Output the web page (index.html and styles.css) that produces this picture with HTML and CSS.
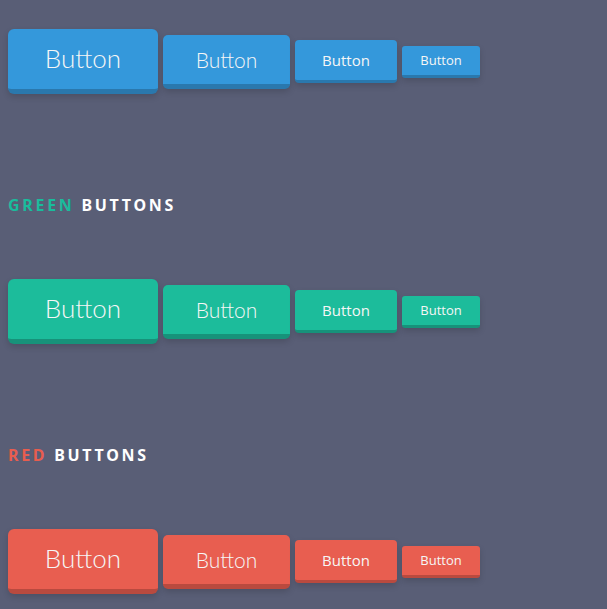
FILE: index.html
```html
<!DOCTYPE html>
<html>
<head>
<meta charset="utf-8">
<link rel="stylesheet" href="styles.css">
</head>
<body>
<div class="page">
  <section class="group">
    <div class="row">
      <button class="btn blue xl">Button</button>
      <button class="btn blue lg">Button</button>
      <button class="btn blue md">Button</button>
      <button class="btn blue sm">Button</button>
    </div>
  </section>
  <section class="group">
    <h2 class="title"><span class="accent-green">GREEN</span> BUTTONS</h2>
    <div class="row">
      <button class="btn green xl">Button</button>
      <button class="btn green lg">Button</button>
      <button class="btn green md">Button</button>
      <button class="btn green sm">Button</button>
    </div>
  </section>
  <section class="group">
    <h2 class="title"><span class="accent-red">RED</span> BUTTONS</h2>
    <div class="row">
      <button class="btn red xl">Button</button>
      <button class="btn red lg">Button</button>
      <button class="btn red md">Button</button>
      <button class="btn red sm">Button</button>
    </div>
  </section>
</div>
</body>
</html>
```
FILE: styles.css
```css
html, body {
  margin: 0;
  padding: 0;
  background: #595e76;
  height: 100%;
  overflow: hidden;
}
.page {
  padding: 29px 8px 0 8px;
}
.group + .group {
  margin-top: 101px;
}
.title {
  margin: 0 0 64px 0;
  font-family: "Noto Sans", "DejaVu Sans", sans-serif;
  font-weight: 700;
  font-size: 16px;
  line-height: 20px;
  letter-spacing: 2.7px;
  color: #ffffff;
}
.accent-green { color: #1abc9c; }
.accent-red { color: #e85d4f; }
.row {
  display: flex;
  align-items: center;
  gap: 5px;
  height: 65px;
}
.btn {
  box-sizing: border-box;
  border: none;
  padding: 0;
  margin: 0;
  color: #f6f6f6;
  font-family: "Lato", "Open Sans", sans-serif;
  font-weight: 300;
  cursor: pointer;
  box-shadow: 0 3px 6px rgba(0, 0, 0, 0.15);
}
.xl { width: 150px; height: 65px; border-bottom: 5px solid; border-radius: 6px; font-size: 26px; padding-bottom: 2px; }
.lg { width: 127px; height: 54px; border-bottom: 5px solid; border-radius: 5px; font-size: 21px; }
.md { width: 102px; height: 43px; border-bottom: 3px solid; border-radius: 4px; font-size: 15px; font-weight: 400; font-family: "Open Sans", sans-serif; }
.sm { width: 78px; height: 32px; border-bottom: 3px solid; border-radius: 3px; font-size: 13px; font-weight: 400; font-family: "Open Sans", sans-serif; }
.blue { background: #3498db; border-bottom-color: #2a78ad; }
.green { background: #1cbc9b; border-bottom-color: #17927a; }
.red { background: #e85e50; border-bottom-color: #b94a3f; }
```
